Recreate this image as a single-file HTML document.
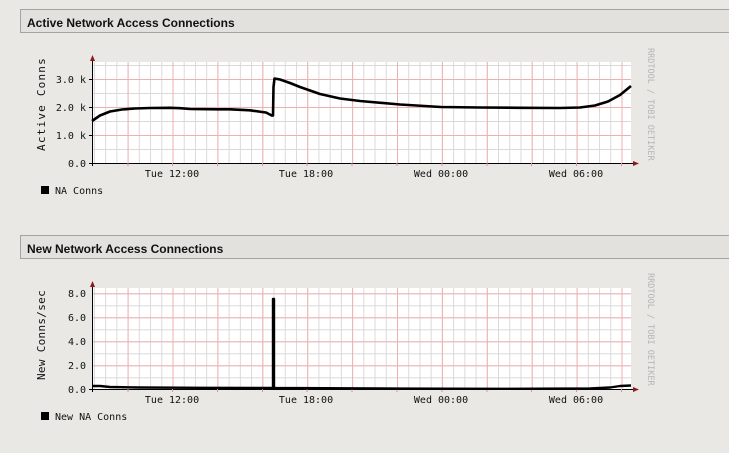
<!DOCTYPE html>
<html><head><meta charset="utf-8"><style>
html,body{margin:0;padding:0;background:#e9e8e4;width:729px;height:453px;overflow:hidden}
.h{position:absolute;left:20px;width:720px;height:24px;border:1px solid #a3a3a3;background:#e2e1dd;box-sizing:border-box;font:bold 12px "Liberation Sans",sans-serif;color:#111;padding:6px 0 0 6px}
svg{position:absolute;left:0;top:0}
</style></head><body>
<div class="h" style="top:9px">Active Network Access Connections</div>
<div class="h" style="top:235px">New Network Access Connections</div>
<svg width="729" height="453" font-family="DejaVu Sans Mono, Liberation Mono, monospace" font-size="10">
<defs>
<pattern id="vmin" patternUnits="userSpaceOnUse" x="127.6" y="0" width="11.225" height="10"><line x1="0.5" y1="0" x2="0.5" y2="10" stroke="#dadada" stroke-width="1"/></pattern>
<pattern id="vmaj" patternUnits="userSpaceOnUse" x="127.6" y="0" width="44.9" height="10"><line x1="0.5" y1="0" x2="0.5" y2="10" stroke="#efb0b0" stroke-width="1"/></pattern>
<pattern id="h1min" patternUnits="userSpaceOnUse" x="0" y="163" width="10" height="14"><line x1="0" y1="0.5" x2="10" y2="0.5" stroke="#dadada"/></pattern>
<pattern id="h1maj" patternUnits="userSpaceOnUse" x="0" y="163" width="10" height="28"><line x1="0" y1="0.5" x2="10" y2="0.5" stroke="#efb0b0"/></pattern>
<pattern id="h2min" patternUnits="userSpaceOnUse" x="0" y="389.3" width="10" height="12"><line x1="0" y1="0.5" x2="10" y2="0.5" stroke="#dadada"/></pattern>
<pattern id="h2maj" patternUnits="userSpaceOnUse" x="0" y="389.3" width="10" height="24"><line x1="0" y1="0.5" x2="10" y2="0.5" stroke="#efb0b0"/></pattern>
</defs>
<!-- graph 1 -->
<rect x="92" y="62" width="539" height="101" fill="#fff"/>
<rect x="92" y="62" width="539" height="101" fill="url(#vmin)"/>
<rect x="92" y="62" width="539" height="101" fill="url(#h1min)"/>
<rect x="92" y="62" width="539" height="101" fill="url(#vmaj)"/>
<rect x="92" y="62" width="539" height="101" fill="url(#h1maj)"/>
<line x1="92.5" y1="60" x2="92.5" y2="166" stroke="#000"/>
<line x1="89" y1="163.5" x2="634" y2="163.5" stroke="#000"/>
<polygon points="92.5,55 90,61 95,61" fill="#8b1a1a"/>
<polygon points="639,163.5 633,161 633,166" fill="#8b1a1a"/>
<g stroke="#000"><line x1="89" y1="135.5" x2="92" y2="135.5"/><line x1="89" y1="107.5" x2="92" y2="107.5"/><line x1="89" y1="79.5" x2="92" y2="79.5"/></g>
<g stroke="#e09090"><line x1="128" y1="163" x2="128" y2="166"/><line x1="172.5" y1="163" x2="172.5" y2="166"/><line x1="217.5" y1="163" x2="217.5" y2="166"/><line x1="262.5" y1="163" x2="262.5" y2="166"/><line x1="307" y1="163" x2="307" y2="166"/><line x1="352" y1="163" x2="352" y2="166"/><line x1="397" y1="163" x2="397" y2="166"/><line x1="442" y1="163" x2="442" y2="166"/><line x1="487" y1="163" x2="487" y2="166"/><line x1="531.5" y1="163" x2="531.5" y2="166"/><line x1="576.5" y1="163" x2="576.5" y2="166"/><line x1="621.5" y1="163" x2="621.5" y2="166"/></g>
<path d="M92,121 L100,115.5 L110,111.5 L122,109.5 L135,108.5 L150,108 L170,107.8 L180,108.2 L190,109 L217,109.3 L230,109.3 L250,110.3 L262,112 L266,112.5 L272,115.6 L273,115.5 L273.5,87 L274.5,78.5 L280,79.5 L290,83 L300,87 L320,94 L340,98.5 L360,101 L400,104.5 L441,107 L480,107.5 L520,107.8 L560,108 L580,107.5 L595,105.5 L608,101.5 L620,95 L631,86" fill="none" stroke="#000" stroke-width="2.6" stroke-linejoin="round"/>
<g fill="#111" text-anchor="end"><text x="86" y="167">0.0</text><text x="86" y="139">1.0 k</text><text x="86" y="111">2.0 k</text><text x="86" y="83">3.0 k</text></g>
<text transform="translate(45,104) rotate(-90)" text-anchor="middle" fill="#111" font-size="11" letter-spacing="1.2">Active Conns</text>
<g fill="#111" text-anchor="middle"><text x="172" y="177">Tue 12:00</text><text x="306" y="177">Tue 18:00</text><text x="441" y="177">Wed 00:00</text><text x="576" y="177">Wed 06:00</text></g>
<text transform="translate(648,48) rotate(90)" fill="#b5b5b5" font-size="8.5">RRDTOOL / TOBI OETIKER</text>
<rect x="41" y="186" width="8" height="8" fill="#000"/>
<text x="55" y="194" fill="#111">NA Conns</text>
<!-- graph 2 -->
<rect x="92" y="288" width="539" height="101.3" fill="#fff"/>
<rect x="92" y="288" width="539" height="101.3" fill="url(#vmin)"/>
<rect x="92" y="288" width="539" height="101.3" fill="url(#h2min)"/>
<rect x="92" y="288" width="539" height="101.3" fill="url(#vmaj)"/>
<rect x="92" y="288" width="539" height="101.3" fill="url(#h2maj)"/>
<line x1="92.5" y1="286" x2="92.5" y2="392" stroke="#000"/>
<line x1="89" y1="389.5" x2="634" y2="389.5" stroke="#000"/>
<polygon points="92.5,281 90,287 95,287" fill="#8b1a1a"/>
<polygon points="639,389.5 633,387 633,392" fill="#8b1a1a"/>
<g stroke="#e09090"><line x1="128" y1="389" x2="128" y2="392"/><line x1="172.5" y1="389" x2="172.5" y2="392"/><line x1="217.5" y1="389" x2="217.5" y2="392"/><line x1="262.5" y1="389" x2="262.5" y2="392"/><line x1="307" y1="389" x2="307" y2="392"/><line x1="352" y1="389" x2="352" y2="392"/><line x1="397" y1="389" x2="397" y2="392"/><line x1="442" y1="389" x2="442" y2="392"/><line x1="487" y1="389" x2="487" y2="392"/><line x1="531.5" y1="389" x2="531.5" y2="392"/><line x1="576.5" y1="389" x2="576.5" y2="392"/><line x1="621.5" y1="389" x2="621.5" y2="392"/></g>
<path d="M92,386 L100,386 L110,387 L140,387.5 L200,387.8 L272,388 L273,388 L273,299 L274,299 L274,388 L350,388.3 L400,388.6 L500,388.8 L590,388.5 L610,387.5 L620,386 L631,385.5" fill="none" stroke="#000" stroke-width="2.4" stroke-linejoin="round"/>
<g fill="#111" text-anchor="end"><text x="86" y="393">0.0</text><text x="86" y="369">2.0</text><text x="86" y="345">4.0</text><text x="86" y="321">6.0</text><text x="86" y="297">8.0</text></g>
<text transform="translate(45,335) rotate(-90)" text-anchor="middle" fill="#111" font-size="11" letter-spacing="0.3">New Conns/sec</text>
<g fill="#111" text-anchor="middle"><text x="172" y="403">Tue 12:00</text><text x="306" y="403">Tue 18:00</text><text x="441" y="403">Wed 00:00</text><text x="576" y="403">Wed 06:00</text></g>
<text transform="translate(648,273) rotate(90)" fill="#b5b5b5" font-size="8.5">RRDTOOL / TOBI OETIKER</text>
<rect x="41" y="412" width="8" height="8" fill="#000"/>
<text x="55" y="420" fill="#111">New NA Conns</text>
</svg>
</body></html>
